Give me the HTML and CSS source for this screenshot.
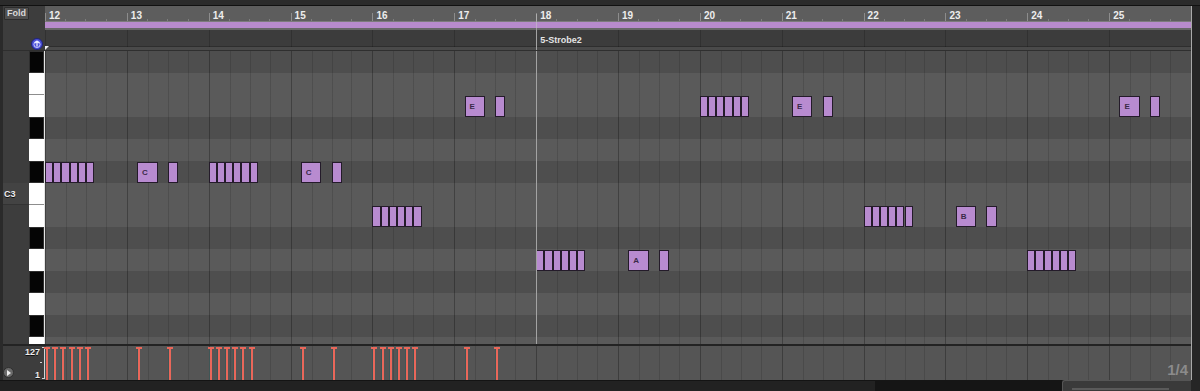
FILE: index.html
```html
<!DOCTYPE html>
<html lang="en">
<head>
  <meta charset="UTF-8">
  <title>Piano Roll</title>
  <link rel="stylesheet" href="styles.css">
</head>
<body>
  <div class="window">
    <div class="topbar"></div>

    <div class="editor">
      <!-- left column: fold, key names, keyboard, velocity scale -->
      <div class="side">
        <div class="side-ruler"><button class="fold">Fold</button></div>
        <div class="side-clip">
          <svg class="scroll-icon" width="12" height="12" viewBox="0 0 12 12">
            <circle cx="6" cy="6" r="5.5" fill="#4b50d8" stroke="#20247a" stroke-width="1"/>
            <circle cx="6" cy="6.4" r="3.1" fill="none" stroke="#c9ccff" stroke-width="1"/>
            <path d="M6 8.6V3.2M4.2 5L6 3.2L7.8 5" fill="none" stroke="#eef0ff" stroke-width="1.2"/>
          </svg>
        </div>
        <div class="side-keys">
          <div class="names" id="names"></div>
          <div class="keys" id="keys"></div>
        </div>
        <div class="side-sep"></div>
        <div class="side-vel">
          <span class="play-btn"></span>
          <span class="vel-num vel-top">127</span>
          <span class="vel-num vel-bottom">1</span>
          <span class="bracket"></span>
        </div>
      </div>

      <!-- main area: ruler, clip header, note grid, velocity lane -->
      <div class="main">
        <div class="ruler">
          <div class="ruler-marks" id="ruler-marks"></div>
          <div class="loop"></div>
          <span class="playhead"></span>
        </div>
        <div class="cliphead">
          <div class="columns"></div>
          <span class="clip-name">5-Strobe2</span>
          <span class="playhead"></span>
          <span class="start-marker"></span>
        </div>
        <div class="canvas">
          <div class="rows" id="rows"></div>
          <div class="columns"></div>
          <div class="notes" id="notes"></div>
          <span class="playhead"></span>
        </div>
        <div class="sep"></div>
        <div class="velocity">
          <div class="columns"></div>
          <div class="stems" id="stems"></div>
          <span class="grid-size">1/4</span>
        </div>
      </div>

      <div class="edge"></div>
    </div>

    <div class="bottombar">
      <div class="scroll-a"></div>
      <div class="scroll-b"></div>
      <div class="scroll-c"><span class="thumb"></span></div>
      <div class="scroll-d"></div>
    </div>
  </div>

  <script>
    const BARS = 14;
    const FIRST_BAR = 12;
    const ROW_H = 22;
    // velocity stems are only drawn up to the playhead (bar 18)
    const STEM_BARS = 6;
    // key colours from the top of the visible range down
    const KEYS = ['b', 'w', 'w', 'b', 'w', 'b', 'w', 'w', 'b', 'w', 'b', 'w', 'b', 'w'];

    // one entry per bar: a run of six short hits, or a labelled hit plus a short one
    const PATTERN = [
      ['run', 5], ['hit', 5, 'C'], ['run', 5], ['hit', 5, 'C'],
      ['run', 7], ['hit', 2, 'E'], ['run', 9], ['hit', 9, 'A'],
      ['run', 2], ['hit', 2, 'E'], ['run', 7], ['hit', 7, 'B'],
      ['run', 9], ['hit', 2, 'E']
    ];

    function el(cls, parent) {
      const d = document.createElement('div');
      d.className = cls;
      parent.appendChild(d);
      return d;
    }

    const ruler = document.getElementById('ruler-marks');
    for (let i = 0; i < BARS; i++) {
      const mark = el('bar-mark', ruler);
      el('bar-num', mark).textContent = FIRST_BAR + i;
    }

    document.querySelectorAll('.columns').forEach(cols => {
      for (let i = 0; i < BARS; i++) el('col', cols);
    });

    const rows = document.getElementById('rows');
    const keys = document.getElementById('keys');
    const names = document.getElementById('names');
    KEYS.forEach((k, i) => {
      el('row ' + (k === 'b' ? 'dark' : 'light'), rows);
      const key = el('key ' + (k === 'b' ? 'black' : 'white'), keys);
      if (k === 'w' && KEYS[i + 1] === 'w') key.classList.add('split');
      const name = el('name', names);
      if (i === 6) {
        name.classList.add('named');
        name.textContent = 'C3';
      }
    });

    const notes = document.getElementById('notes');
    const stems = document.getElementById('stems');
    function addNote(bar, start, len, row, label) {
      const left = (bar + start) / BARS * 100;
      const n = el('note', notes);
      n.style.left = left + '%';
      n.style.width = (len / BARS * 100) + '%';
      n.style.top = (1 + row * ROW_H) + 'px';
      if (label) n.textContent = label;
      if (bar < STEM_BARS) {
        const s = el('stem', stems);
        s.style.left = 'calc(' + left + '% + 1px)';
      }
    }

    PATTERN.forEach(([kind, row, label], bar) => {
      if (kind === 'run') {
        for (let k = 0; k < 6; k++) addNote(bar, k * 0.1, 0.1, row);
      } else {
        addNote(bar, 0.125, 0.25, row, label);
        addNote(bar, 0.5, 0.125, row);
      }
    });
  </script>
</body>
</html>
```

FILE: styles.css
```css
* {
  box-sizing: border-box;
}

body {
  margin: 0;
  background: #1d1d1d;
  font-family: "Liberation Sans", Arial, sans-serif;
}

.window {
  width: 1200px;
  height: 391px;
  display: flex;
  flex-direction: column;
  overflow: hidden;
}

.topbar {
  height: 6px;
  background: #2b2b2b;
  border-bottom: 1px solid #111;
}

.editor {
  height: 374px;
  display: flex;
}

/* ---- left column ---- */

.side {
  width: 45px;
  display: flex;
  flex-direction: column;
  background: #3d3d3d;
  border-left: 3px solid #2a2a2a;
}

.side-ruler {
  height: 24px;
  padding: 1px 0 0 1px;
}

.fold {
  display: block;
  width: 25px;
  height: 13px;
  padding: 0;
  background: #4f4f4f;
  border: 1px solid #2c2c2c;
  border-radius: 1px;
  color: #d8d8d8;
  font-family: "Liberation Sans", Arial, sans-serif;
  font-size: 9px;
  font-weight: bold;
  line-height: 11px;
}

.side-clip {
  height: 20px;
  display: flex;
  align-items: flex-end;
  justify-content: flex-end;
  padding-right: 2px;
}

.scroll-icon {
  display: block;
}

.side-keys {
  height: 294px;
  display: flex;
  border-top: 1px solid #2e2e2e;
  overflow: hidden;
}

.names {
  width: 26px;
  display: flex;
  flex-direction: column;
}

.name {
  height: 22px;
  flex-shrink: 0;
}

.name.named {
  background: #434343;
  border-bottom: 1px solid #333;
  color: #eee;
  font-size: 9px;
  font-weight: bold;
  line-height: 22px;
  padding-left: 1px;
  text-shadow: 0 1px 0 #111;
}

.keys {
  width: 16px;
  display: flex;
  flex-direction: column;
  border-right: 1px solid #e4e4e4;
}

.key {
  height: 22px;
  flex-shrink: 0;
}

.key.white {
  background: #fff;
}

.key.white.split {
  border-bottom: 1px solid #8d8d8d;
}

.key.black {
  background: #050505;
  border: 1px solid #2f2f2f;
}

.side-sep {
  height: 2px;
  background: #232323;
}

.side-vel {
  height: 34px;
  position: relative;
}

.play-btn {
  position: absolute;
  left: 0;
  top: 21px;
  width: 11px;
  height: 11px;
  border-radius: 50%;
  background: #6a6a6a;
  border: 1px solid #2e2e2e;
}

.play-btn::after {
  content: "";
  position: absolute;
  left: 3px;
  top: 2px;
  border-left: 4px solid #eee;
  border-top: 3px solid transparent;
  border-bottom: 3px solid transparent;
}

.vel-num {
  position: absolute;
  right: 5px;
  color: #eee;
  font-size: 9px;
  font-weight: bold;
  line-height: 9px;
  text-shadow: 0 1px 0 #111;
}

.vel-top {
  top: 2px;
}

.vel-bottom {
  top: 25px;
}

.bracket {
  position: absolute;
  right: 0;
  top: 1px;
  width: 3px;
  height: 32px;
  border: 1px solid #d4d4d4;
  border-left: none;
}

.bracket::after {
  content: "";
  position: absolute;
  left: -2px;
  top: 14px;
  width: 2px;
  height: 1px;
  background: #d4d4d4;
}

/* ---- main area ---- */

.main {
  flex: 1;
  display: flex;
  flex-direction: column;
  min-width: 0;
}

.ruler {
  height: 24px;
  position: relative;
  background: #5d5d5d;
}

.ruler .playhead {
  top: 8px;
  background: rgba(200, 200, 200, 0.55);
}

.ruler-marks {
  height: 15px;
  display: flex;
}

.bar-mark {
  flex: 1;
  position: relative;
  background:
    linear-gradient(#7d7d7d, #7d7d7d) 25% 100% / 1px 2px no-repeat,
    linear-gradient(#7d7d7d, #7d7d7d) 50% 100% / 1px 2px no-repeat,
    linear-gradient(#7d7d7d, #7d7d7d) 75% 100% / 1px 2px no-repeat;
}

.bar-mark::before {
  content: "";
  position: absolute;
  left: 0;
  bottom: 0;
  width: 1px;
  height: 8px;
  background: #8c8c8c;
}

.bar-num {
  position: absolute;
  left: 4px;
  top: 5px;
  color: #ededed;
  font-size: 10px;
  font-weight: bold;
  line-height: 10px;
}

.loop {
  height: 9px;
  background: #b78bcc;
  border-top: 1px solid #7b7b7b;
  border-bottom: 2px solid #676767;
}

.cliphead {
  height: 20px;
  position: relative;
  background: #3c3c3c;
  border-bottom: 3px solid #4a4a4a;
  box-shadow: inset 0 -1px 0 #2e2e2e;
}

.clip-name {
  position: absolute;
  left: calc(600% / 14 + 4px);
  top: 5px;
  color: #e4e4e4;
  font-size: 9px;
  font-weight: bold;
  line-height: 10px;
}

.start-marker {
  position: absolute;
  left: 0;
  bottom: -3px;
  border-top: 4px solid #f2f2f2;
  border-right: 4px solid transparent;
}

.columns {
  position: absolute;
  inset: 0;
  display: flex;
  pointer-events: none;
}

.col {
  flex: 1;
  border-left: 1px solid rgba(0, 0, 0, 0.28);
  background:
    linear-gradient(rgba(0, 0, 0, 0.13), rgba(0, 0, 0, 0.13)) 25% 0 / 1px 100% no-repeat,
    linear-gradient(rgba(0, 0, 0, 0.13), rgba(0, 0, 0, 0.13)) 50% 0 / 1px 100% no-repeat,
    linear-gradient(rgba(0, 0, 0, 0.13), rgba(0, 0, 0, 0.13)) 75% 0 / 1px 100% no-repeat;
}

.cliphead .col {
  border-left-color: rgba(0, 0, 0, 0.18);
  background: none;
}

.playhead {
  position: absolute;
  left: calc(600% / 14);
  top: 0;
  bottom: 0;
  width: 1px;
  background: #a3a3a3;
}

.cliphead .playhead {
  bottom: -3px;
}

.canvas {
  height: 294px;
  position: relative;
  overflow: hidden;
  border-top: 1px solid #2f2f2f;
}

.rows {
  display: flex;
  flex-direction: column;
}

.row {
  height: 22px;
  flex-shrink: 0;
}

.row.light {
  background: #5a5a5a;
}

.row.dark {
  background: #4e4e4e;
}

.notes {
  position: absolute;
  inset: 0;
}

.note {
  position: absolute;
  height: 21px;
  background: #b88bd0;
  border: 1px solid #241b2a;
  color: #3a2a48;
  font-size: 8px;
  font-weight: bold;
  line-height: 19px;
  padding-left: 4px;
  overflow: hidden;
}

.sep {
  height: 2px;
  background: #232323;
}

.velocity {
  height: 34px;
  position: relative;
  background: #555;
}

.stems {
  position: absolute;
  inset: 0;
}

.stem {
  position: absolute;
  top: 1px;
  bottom: 0;
  width: 2px;
  background: #e9675a;
  box-shadow: -1px 0 0 #3e5656;
}

.stem::before {
  content: "";
  position: absolute;
  left: -2px;
  top: 0;
  width: 6px;
  height: 2px;
  background: #e9675a;
}

.grid-size {
  position: absolute;
  right: 3px;
  bottom: 4px;
  color: #8b8b8b;
  font-size: 15px;
  font-weight: bold;
  line-height: 13px;
}

.edge {
  width: 9px;
  background: #262626;
  border-left: 1px solid #a9a9a9;
}

/* ---- bottom scroll strip ---- */

.bottombar {
  height: 11px;
  display: flex;
}

.scroll-a {
  width: 875px;
  background: #222;
  border-top: 1px solid #141414;
}

.scroll-b {
  width: 187px;
  background: #151515;
}

.scroll-c {
  width: 129px;
  position: relative;
  background: #3a3a3a;
  border-top: 1px solid #555;
  border-left: 1px solid #555;
  border-radius: 3px 0 0 0;
}

.thumb {
  position: absolute;
  left: 9px;
  right: 22px;
  top: 7px;
  height: 2px;
  background: #5a5a5a;
}

.scroll-d {
  flex: 1;
  background: #262626;
}
```
